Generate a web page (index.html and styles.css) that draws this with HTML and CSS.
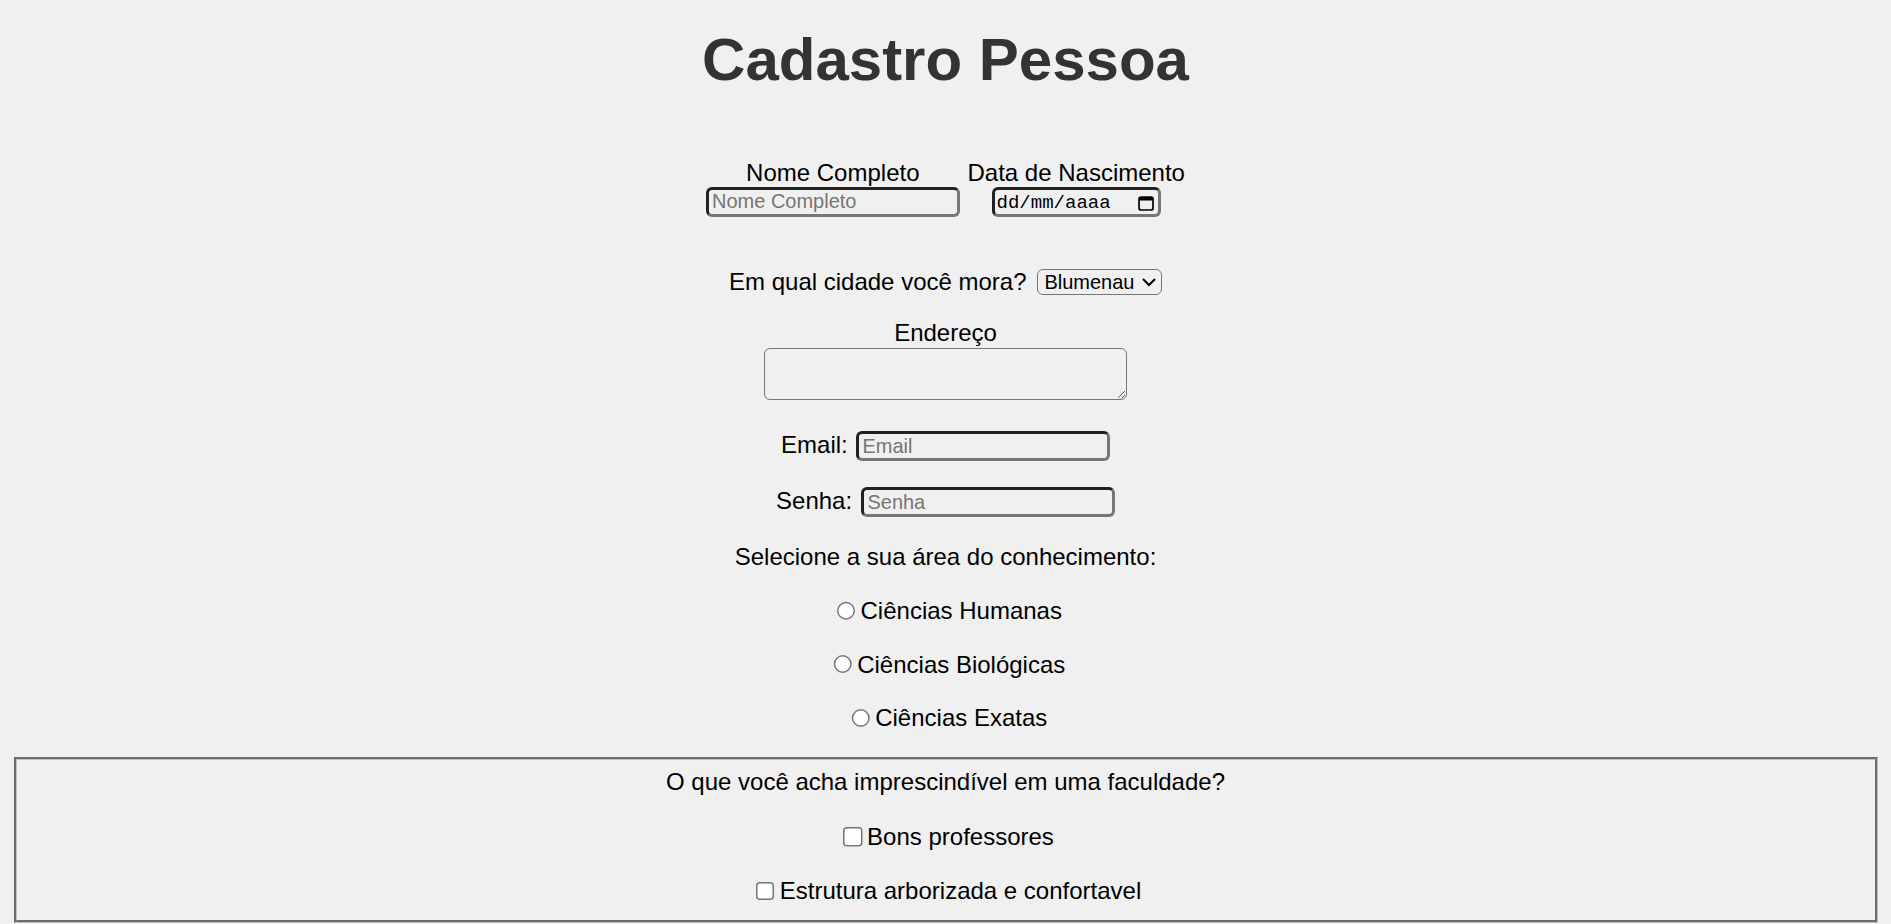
FILE: index.html
```html
<!DOCTYPE html>
<html lang="pt-BR">
<head>
<meta charset="utf-8">
<title>Cadastro Pessoa</title>
<link rel="stylesheet" href="styles.css">
</head>
<body>
<h1 class="title">Cadastro Pessoa</h1>
<form class="form">
  <div class="row-names">
    <div class="field-col">
      <label for="nome">Nome Completo</label>
      <input class="text-input" type="text" id="nome" placeholder="Nome Completo">
    </div>
    <div class="field-col">
      <label for="nasc">Data de Nascimento</label>
      <span class="date-input" id="nasc"><span class="date-text">dd/mm/aaaa</span><svg class="cal-icon" width="10.7" height="10" viewBox="0 0 16 15" aria-hidden="true"><rect x="1" y="1" width="14" height="13" rx="2" fill="none" stroke="#000" stroke-width="1.7"/><path d="M1 3a2 2 0 0 1 2-2h10a2 2 0 0 1 2 2v1.4H1z" fill="#000"/></svg></span>
    </div>
  </div>

  <div class="row-inline row-city">
    <label for="cidade">Em qual cidade você mora?</label>
    <select id="cidade" class="select"><option>Blumenau</option><option>Joinville</option><option>Florianópolis</option></select>
  </div>

  <div class="field-col row-address">
    <label for="endereco">Endereço</label>
    <textarea id="endereco" class="textarea"></textarea>
  </div>

  <div class="row-login row-email">
    <label for="email">Email:</label>
    <input class="text-input" type="email" id="email" placeholder="Email">
  </div>

  <div class="row-login row-senha">
    <label for="senha">Senha:</label>
    <input class="text-input" type="password" id="senha" placeholder="Senha">
  </div>

  <div class="prompt">Selecione a sua área do conhecimento:</div>

  <div class="option">
    <input type="radio" id="humanas" name="area" class="radio">
    <label for="humanas">Ciências Humanas</label>
  </div>
  <div class="option">
    <input type="radio" id="biologicas" name="area" class="radio">
    <label for="biologicas">Ciências Biológicas</label>
  </div>
  <div class="option">
    <input type="radio" id="exatas" name="area" class="radio">
    <label for="exatas">Ciências Exatas</label>
  </div>

  <fieldset class="faculdade">
    <div class="question">O que você acha imprescindível em uma faculdade?</div>
    <div class="option check-row">
      <input type="checkbox" id="prof" class="check">
      <label for="prof">Bons professores</label>
    </div>
    <div class="option check-row">
      <input type="checkbox" id="estrutura" class="check">
      <label for="estrutura">Estrutura arborizada e confortavel</label>
    </div>
  </fieldset>
</form>
</body>
</html>
```

FILE: styles.css
```css
html {
  zoom: 1.5;
}

body {
  margin: 8px;
  display: flex;
  flex-direction: column;
  background: #f0f0f0;
  color: #000;
  font-family: "Liberation Sans", Arial, sans-serif;
  font-size: 16px;
  line-height: normal;
}

.title {
  margin: 8.9px 0 0;
  font-size: 40px;
  line-height: 46px;
  font-weight: bold;
  color: #333;
  text-align: center;
}

.form {
  display: flex;
  flex-direction: column;
  margin-top: 43px;
}

.row-names {
  display: flex;
  justify-content: center;
  align-items: flex-start;
  gap: 5.3px;
}

.field-col {
  display: flex;
  flex-direction: column;
  align-items: center;
}

.text-input {
  box-sizing: border-box;
  width: 169px;
  height: 20px;
  margin: 0;
  padding: 1px 2px;
  border: 2px inset rgb(118, 118, 118);
  border-radius: 4px;
  background: transparent;
  color: #000;
  font-family: "Liberation Sans", Arial, sans-serif;
  font-size: 13.33px;
}

.text-input::placeholder {
  color: #757575;
}

.date-input {
  box-sizing: border-box;
  width: 112.7px;
  height: 20px;
  display: flex;
  align-items: center;
  justify-content: space-between;
  padding: 1px 2.3px 0 1.2px;
  border: 2px inset rgb(118, 118, 118);
  border-radius: 4px;
  color: #000;
  font-family: "Liberation Mono", "DejaVu Sans Mono", monospace;
  font-size: 12.7px;
}

.cal-icon {
  display: block;
  margin-top: 1.5px;
}

.row-inline {
  display: flex;
  justify-content: center;
  align-items: center;
}

.row-city {
  margin-top: 34px;
  gap: 7.3px;
}

.select {
  box-sizing: border-box;
  width: 83px;
  height: 17px;
  margin: 0;
  border: 1px solid #767676;
  border-radius: 4px;
  background-color: transparent;
  color: #000;
  font-family: "Liberation Sans", Arial, sans-serif;
  font-size: 13.33px;
}

.row-address {
  margin-top: 15.2px;
}

.textarea {
  box-sizing: border-box;
  display: block;
  width: 242px;
  height: 35.3px;
  margin: 0.6px 0 0;
  padding: 2px;
  border: 1px solid #767676;
  border-radius: 4px;
  background: transparent;
}

.row-login {
  display: flex;
  justify-content: center;
  align-items: baseline;
}

.row-email {
  margin-top: 20.2px;
  gap: 5.8px;
}

.row-senha {
  margin-top: 17px;
  gap: 6.2px;
}

.prompt {
  margin-top: 17.2px;
  text-align: center;
}

.option {
  display: flex;
  justify-content: center;
  align-items: center;
  height: 18.4px;
  margin-top: 17.4px;
}

.radio {
  margin: 0 3px 0 5px;
}

.check {
  margin: 0 3px 0 4px;
}

.faculdade {
  margin: 16.6px 1px 0;
  padding: 5.6px 12px 10px;
  border: 2px groove rgb(192, 192, 192);
  min-width: 0;
}

.question {
  text-align: center;
}

.check-row {
  margin-top: 17.9px;
}
```
